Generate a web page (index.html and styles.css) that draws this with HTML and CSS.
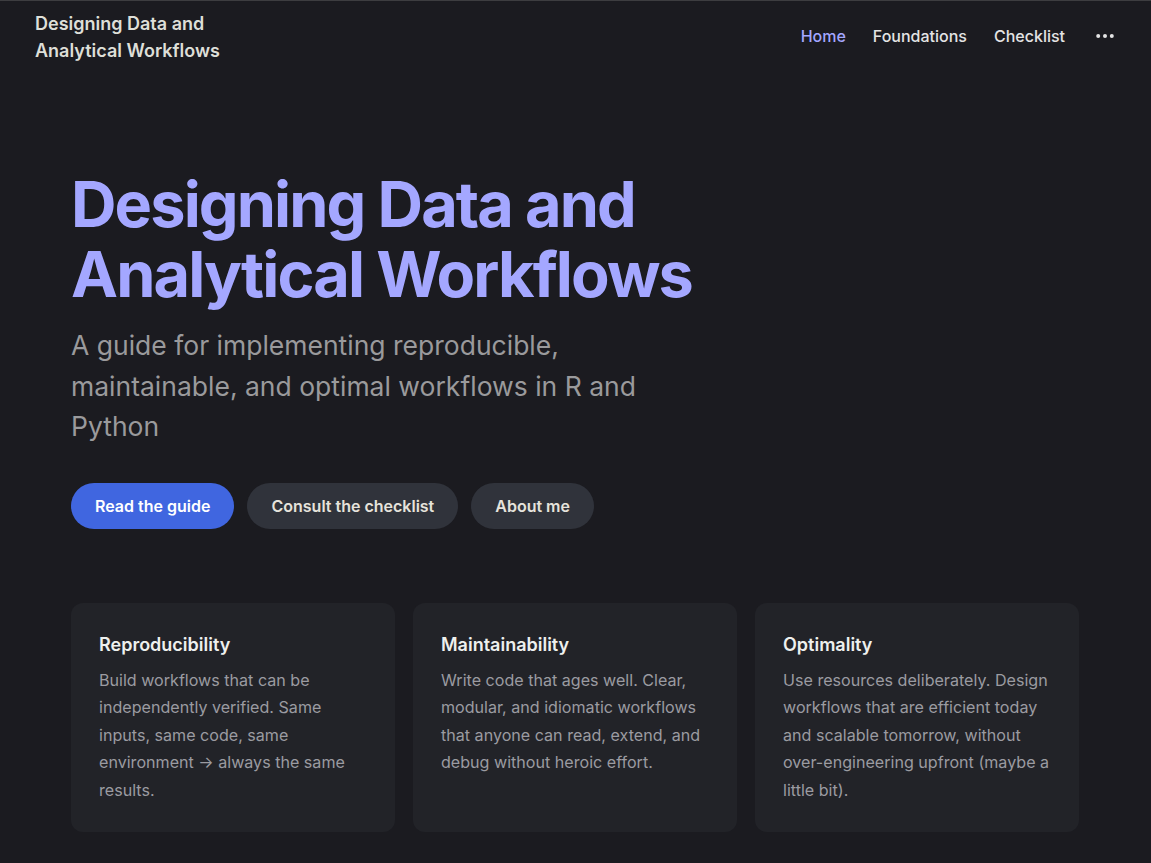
FILE: index.html
```html
<!DOCTYPE html>
<html lang="en">
<head>
	<meta charset="UTF-8">
	<title>Designing Data and Analytical Workflows</title>
	<link rel="stylesheet" href="styles.css">
</head>
<body>
<div class="navbar">
	<a href="#" class="brand">Designing Data and<br>Analytical Workflows</a>
	<div class="nav-links">
		<a href="#" class="active">Home</a>
		<a href="#">Foundations</a>
		<a href="#">Checklist</a>
		<a href="#" class="more">
			<svg width="18" height="6" viewBox="0 0 18 6">
				<circle cx="2.2" cy="3" r="2" fill="#e4e4e4"/>
				<circle cx="9" cy="3" r="2" fill="#e4e4e4"/>
				<circle cx="15.8" cy="3" r="2" fill="#e4e4e4"/>
			</svg>
		</a>
	</div>
</div>

<div class="hero">
	<h1>Designing Data and<br>Analytical Workflows</h1>
	<p class="lead">A guide for implementing reproducible, maintainable, and optimal workflows in R and Python</p>
	<div class="actions">
		<a href="#" class="btn btn-primary">Read the guide</a>
		<a href="#" class="btn">Consult the checklist</a>
		<a href="#" class="btn">About me</a>
	</div>

	<div class="cards">
		<div class="card">
			<h3>Reproducibility</h3>
			<p>Build workflows that can be independently verified. Same inputs, same code, same environment &rarr; always the same results.</p>
		</div>
		<div class="card">
			<h3>Maintainability</h3>
			<p>Write code that ages well. Clear, modular, and idiomatic workflows that anyone can read, extend, and debug without heroic effort.</p>
		</div>
		<div class="card">
			<h3>Optimality</h3>
			<p>Use resources deliberately. Design workflows that are efficient today and scalable tomorrow, without over-engineering upfront (maybe a little bit).</p>
		</div>
	</div>
</div>
</body>
</html>
```

FILE: styles.css
```css
* {
	margin: 0;
	padding: 0;
	box-sizing: border-box;
}
html, body {
	height: 100%;
}
body {
	background: #1b1b20;
	border-top: 1px solid #3d3d40;
	font-family: Inter, "Noto Sans", sans-serif;
	color: #e2e2e2;
	overflow: hidden;
}
a {
	text-decoration: none;
	color: inherit;
}

/* top bar */
.navbar {
	display: flex;
	align-items: center;
	justify-content: space-between;
	padding: 9px 37px 10px 35px;
}
.brand {
	font-size: 18px;
	font-weight: 600;
	line-height: 27px;
	color: #dedfd8;
}
.nav-links {
	display: flex;
	align-items: center;
	gap: 27px;
	margin-bottom: 2px;
	font-size: 16px;
	font-weight: 500;
	color: #e4e4e4;
}
.nav-links .active {
	color: #a4a7ff;
}
.nav-links .more {
	display: flex;
	margin-left: 4px;
}

/* hero */
.hero {
	padding: 95px 72px 0 71px;
}
.hero h1 {
	font-size: 63px;
	font-weight: 700;
	line-height: 70px;
	letter-spacing: -0.03em;
	color: #a4a7ff;
}
.lead {
	max-width: 600px;
	margin-top: 16px;
	font-size: 26.5px;
	line-height: 40.5px;
	color: #9a9a9c;
}
.actions {
	display: flex;
	gap: 13px;
	margin-top: 36px;
}
.btn {
	display: inline-flex;
	align-items: center;
	height: 46px;
	padding: 0 24px;
	border-radius: 23px;
	background: #30333b;
	font-size: 16px;
	font-weight: 600;
	color: #e6e3dc;
}
.btn-primary {
	background: #4066e0;
	color: #ffffff;
}

/* feature cards */
.cards {
	display: grid;
	grid-template-columns: repeat(3, 1fr);
	gap: 18px;
	margin-top: 74px;
}
.card {
	height: 229px;
	padding: 29px 28px;
	border-radius: 12px;
	background: #222328;
}
.card h3 {
	font-size: 18px;
	font-weight: 600;
	line-height: 26px;
	color: #eef0ee;
}
.card p {
	margin-top: 9px;
	font-size: 16.1px;
	line-height: 27.5px;
	color: #9b9ba1;
}
```
